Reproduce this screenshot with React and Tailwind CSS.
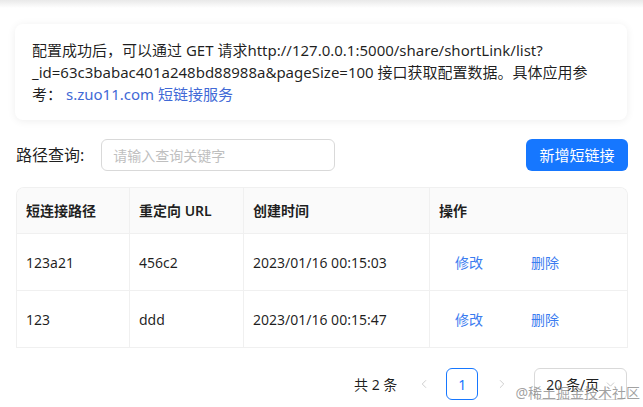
import { ChevronLeft, ChevronRight, ChevronDown } from "lucide-react";

const rows = [
  { path: "123a21", url: "456c2", time: "2023/01/16 00:15:03" },
  { path: "123", url: "ddd", time: "2023/01/16 00:15:47" },
];

const FONT = { fontFamily: '"Noto Sans", "Noto Sans CJK SC", sans-serif' };

export default function App() {
  return (
    <div
      className="relative h-[407px] w-[643px] overflow-hidden bg-white text-[rgba(0,0,0,0.88)]"
      style={FONT}
    >
      <div className="h-[8px] bg-gradient-to-b from-[#e9e9e9] to-white" />

      <section className="ml-[15px] mt-[16px] w-[612px] rounded-lg px-[17px] py-[15px] text-[15px] leading-[22px] shadow-[0_1px_8px_rgba(0,0,0,0.07)]">
        <div className="whitespace-nowrap">
          配置成功后，可以通过 GET 请求http://127.0.0.1:5000/share/shortLink/list?
        </div>
        <div className="whitespace-nowrap">
          _id=63c3babac401a248bd88988a&amp;pageSize=100 接口获取配置数据。具体应用参
        </div>
        <div className="whitespace-nowrap">
          考：<span className="ml-[4px] text-[#4169d6]">s.zuo11.com 短链接服务</span>
        </div>
      </section>

      <div className="mt-[19px] flex items-center justify-between pl-[16px] pr-[15px]">
        <div className="flex items-center">
          <span className="text-[16px]">路径查询:</span>
          <input
            className="ml-[17px] h-[32px] w-[234px] rounded-md border border-[#d9d9d9] px-[11px] text-[14px] outline-none placeholder:text-[#bfbfbf]"
            placeholder="请输入查询关键字"
          />
        </div>
        <button
          type="button"
          className="h-[32px] w-[102px] rounded-md bg-[#1677ff] text-[15px] text-white"
        >
          新增短链接
        </button>
      </div>

      <div className="ml-[16px] mt-[16px] w-[612px] overflow-hidden rounded-t-lg border-x border-t border-[#f0f0f0] text-[14px]">
        <div className="grid h-[46px] grid-cols-[113px_114px_186px_1fr] border-b border-[#f0f0f0] bg-[#fafafa] font-semibold">
          <div className="flex items-center border-r border-[#f0f0f0] pl-[9px]">短连接路径</div>
          <div className="flex items-center border-r border-[#f0f0f0] pl-[9px]">重定向 URL</div>
          <div className="flex items-center border-r border-[#f0f0f0] pl-[9px]">创建时间</div>
          <div className="flex items-center pl-[9px]">操作</div>
        </div>
        {rows.map((row) => (
          <div
            key={row.time}
            className="grid h-[57px] grid-cols-[113px_114px_186px_1fr] border-b border-[#f0f0f0]"
          >
            <div className="flex items-center border-r border-[#f0f0f0] pl-[9px]">{row.path}</div>
            <div className="flex items-center border-r border-[#f0f0f0] pl-[9px]">{row.url}</div>
            <div className="flex items-center border-r border-[#f0f0f0] pl-[9px]">{row.time}</div>
            <div className="flex items-center gap-[48px] pl-[25px] text-[#3b7cf0]">
              <span>修改</span>
              <span>删除</span>
            </div>
          </div>
        ))}
      </div>

      <div className="mt-[20px] flex items-center pl-[354px] text-[14px]">
        <span>共 2 条</span>
        <ChevronLeft className="ml-[20px] h-[14px] w-[14px] text-[#c8c8c8]" strokeWidth={1.5} />
        <div className="ml-[15px] flex h-[32px] w-[32px] items-center justify-center rounded-md border border-[#1677ff] text-[#1677ff]">
          1
        </div>
        <ChevronRight className="ml-[17px] h-[14px] w-[14px] text-[#c8c8c8]" strokeWidth={1.5} />
        <div className="ml-[25px] flex h-[32px] w-[93px] items-center justify-between rounded-md border border-[#d9d9d9] pl-[11px] pr-[9px]">
          <span>20 条/页</span>
          <ChevronDown className="h-[13px] w-[13px] text-[#bfbfbf]" strokeWidth={1.5} />
        </div>
      </div>

      <div className="absolute bottom-[4px] right-[3px] text-[14px] text-[rgba(120,120,120,0.7)]">
        @稀土掘金技术社区
      </div>
    </div>
  );
}
